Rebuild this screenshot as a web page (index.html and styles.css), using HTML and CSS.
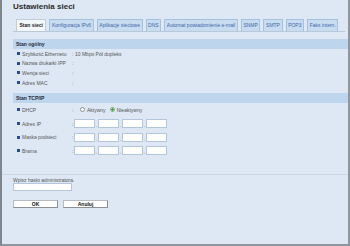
FILE: index.html
```html
<!DOCTYPE html>
<html lang="pl">
<head>
    <meta charset="UTF-8">
    <title>Ustawienia sieci</title>
    <link rel="stylesheet" href="styles.css">
</head>
<body>
    <div class="page">
        <div class="main">
            <h1 class="title">Ustawienia sieci</h1>
            <div class="tabs">
                <span class="tab active">Stan sieci</span>
                <span class="tab">Konfiguracja IPv6</span>
                <span class="tab">Aplikacje sieciowe</span>
                <span class="tab">DNS</span>
                <span class="tab">Automat powiadomienie e-mail</span>
                <span class="tab">SNMP</span>
                <span class="tab">SMTP</span>
                <span class="tab">POP3</span>
                <span class="tab">Faks intern.</span>
            </div>

            <div class="section-head">Stan ogólny</div>
            <div class="rows">
                <div class="row">
                    <span class="bullet"></span>
                    <span class="label">Szybkość Ethernetu</span>
                    <span class="colon">:</span>
                    <span class="value">10 Mbps Pół dupleks</span>
                </div>
                <div class="row">
                    <span class="bullet"></span>
                    <span class="label">Nazwa drukarki IPP</span>
                    <span class="colon">:</span>
                    <span class="value"></span>
                </div>
                <div class="row">
                    <span class="bullet"></span>
                    <span class="label">Wersja sieci</span>
                    <span class="colon">:</span>
                    <span class="value"></span>
                </div>
                <div class="row">
                    <span class="bullet"></span>
                    <span class="label">Adres MAC</span>
                    <span class="colon">:</span>
                    <span class="value"></span>
                </div>
            </div>

            <div class="section-head second">Stan TCP/IP</div>
            <div class="rows tcp">
                <div class="row">
                    <span class="bullet"></span>
                    <span class="label">DHCP</span>
                    <span class="colon">:</span>
                    <span class="radios">
                        <span class="radio"></span><span class="radio-text">Aktywny</span>
                        <span class="radio checked"></span><span class="radio-text">Nieaktywny</span>
                    </span>
                </div>
                <div class="row">
                    <span class="bullet"></span>
                    <span class="label">Adres IP</span>
                    <span class="colon">:</span>
                    <span class="ip">
                        <span class="box"></span><span class="dot">.</span><span class="box"></span><span class="dot">.</span><span class="box"></span><span class="dot">.</span><span class="box"></span>
                    </span>
                </div>
                <div class="row">
                    <span class="bullet"></span>
                    <span class="label">Maska podsieci</span>
                    <span class="colon">:</span>
                    <span class="ip">
                        <span class="box"></span><span class="dot">.</span><span class="box"></span><span class="dot">.</span><span class="box"></span><span class="dot">.</span><span class="box"></span>
                    </span>
                </div>
                <div class="row">
                    <span class="bullet"></span>
                    <span class="label">Brama</span>
                    <span class="colon">:</span>
                    <span class="ip">
                        <span class="box"></span><span class="dot">.</span><span class="box"></span><span class="dot">.</span><span class="box"></span><span class="dot">.</span><span class="box"></span>
                    </span>
                </div>
            </div>
        </div>

        <div class="footer">
            <div class="pass-label">Wpisz hasło administratora.</div>
            <div class="pass-box"></div>
            <div class="buttons">
                <span class="button">OK</span>
                <span class="button">Anuluj</span>
            </div>
        </div>
    </div>
</body>
</html>
```

FILE: styles.css
```css
body {
    margin: 0;
    font-family: "Liberation Sans", Arial, sans-serif;
    font-size: 5px;
    color: #555;
}
.page {
    box-sizing: border-box;
    width: 350px;
    height: 246px;
    background-color: #dee8f4;
    border-left: 2px solid #7d858e;
    border-right: 2px solid #8e969f;
    border-bottom: 2px solid #8e969f;
}
.main {
    padding-left: 11px;
}
.title {
    margin: 0;
    padding-top: 2px;
    font-size: 8px;
    line-height: 10px;
    font-weight: bold;
    color: #2b2b2b;
}
.tabs {
    display: flex;
    gap: 3px;
    margin-top: 7px;
    margin-right: 3px;
    padding-left: 3px;
    border-bottom: 1px solid #b9c9da;
}
.tab {
    box-sizing: border-box;
    height: 12px;
    line-height: 10px;
    padding: 0 1.6px;
    background-color: #c8dcf1;
    border: 1px solid #a6c1de;
    border-bottom: none;
    color: #3f67a6;
    white-space: nowrap;
}
.tab.active {
    padding: 0 2.5px;
    background-color: #f4f7fa;
    border-color: #c4ccd6;
    color: #222;
    font-weight: bold;
}
.section-head {
    margin-top: 7px;
    height: 10px;
    line-height: 10px;
    padding-left: 3px;
    background-color: #bdd6ed;
    color: #1f2a3a;
    font-weight: bold;
}
.section-head.second {
    margin-top: 5.6px;
}
.row {
    display: flex;
    align-items: center;
    height: 9.6px;
}
.tcp .row {
    height: 13.7px;
}
.bullet {
    width: 3px;
    height: 3px;
    margin-left: 4px;
    background-color: #2a4b98;
}
.label {
    width: 50px;
    margin-left: 2px;
    white-space: nowrap;
}
.colon {
    width: 2px;
}
.value {
    margin-left: 1px;
}
.radios {
    display: flex;
    align-items: center;
    margin-left: 6px;
}
.radio {
    box-sizing: border-box;
    width: 5px;
    height: 5px;
    border: 1px solid #8a8f96;
    border-radius: 50%;
    background-color: #fff;
}
.radio.checked {
    border-color: #79a879;
    background: radial-gradient(circle, #4e9a4e 0 1px, #fff 1.2px);
}
.radio-text {
    margin: 0 4px 0 2px;
}
.ip {
    display: flex;
    align-items: flex-end;
}
.box {
    box-sizing: border-box;
    width: 21px;
    height: 9px;
    background-color: #fff;
    border: 1px solid #b3c6db;
}
.dot {
    width: 3px;
    text-align: center;
    line-height: 5px;
}
.footer {
    margin-top: 16px;
    padding-left: 11px;
    border-top: 1px solid #c8d5e4;
}
.pass-label {
    margin-top: 2px;
    line-height: 6px;
}
.pass-box {
    box-sizing: border-box;
    width: 59px;
    height: 8px;
    background-color: #fff;
    border: 1px solid #b3c6db;
}
.buttons {
    display: flex;
    gap: 5px;
    margin-top: 9px;
}
.button {
    box-sizing: border-box;
    width: 45px;
    height: 8px;
    line-height: 6px;
    text-align: center;
    background-color: #fff;
    border: 1px solid #b8bcc2;
    border-right-color: #8c9096;
    border-bottom-color: #8c9096;
    color: #111;
    font-weight: bold;
}
```
